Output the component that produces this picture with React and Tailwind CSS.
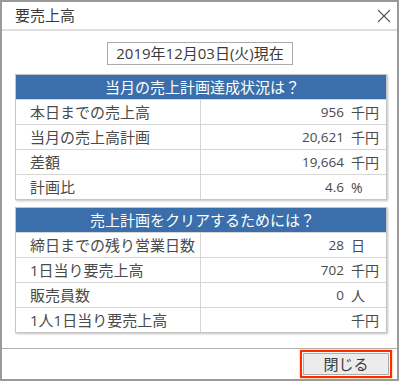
import React from 'react';

const jp = { fontFamily: '"Open Sans", "Noto Sans CJK JP", sans-serif' };

const planRows = [
  { label: '本日までの売上高', value: '956', unit: '千円' },
  { label: '当月の売上高計画', value: '20,621', unit: '千円' },
  { label: '差額', value: '19,664', unit: '千円' },
  { label: '計画比', value: '4.6', unit: '%' },
];

const clearRows = [
  { label: '締日までの残り営業日数', value: '28', unit: '日' },
  { label: '1日当り要売上高', value: '702', unit: '千円' },
  { label: '販売員数', value: '0', unit: '人' },
  { label: '1人1日当り要売上高', value: '', unit: '千円' },
];

function Section({ title, rows }) {
  return (
    <div className="border border-[#c6c6c6] shadow-[1px_1px_2px_rgba(0,0,0,0.25)] bg-white">
      <div className="h-[24px] bg-[#3a6fab] text-white text-[15px] flex items-center justify-center pl-[3px]">
        {title}
      </div>
      {rows.map((r, i) => (
        <div key={i} className="grid grid-cols-[185px_1fr] h-[25px] border-t border-[#d6d6d6]">
          <div className="flex items-center pl-[14px] text-[15px] text-[#4a4a4a] border-r border-[#d6d6d6]">
            {r.label}
          </div>
          <div className="flex items-center justify-end text-[#4a4a4a]">
            <span className="text-[13.5px]">{r.value}</span>
            <span className="w-[28px] ml-[7px] mr-[7px] text-[14px] text-left">{r.unit}</span>
          </div>
        </div>
      ))}
    </div>
  );
}

export default function App() {
  return (
    <div style={jp} className="w-[399px] h-[382px] bg-white">
      <div className="w-[399px] h-[381px] border-2 border-[#9a9a9a] flex flex-col bg-white">
        {/* Title bar */}
        <div className="h-[29px] flex items-center justify-between pl-[13px] pr-[5px] border-b-2 border-[#dedede]">
          <span className="text-[15px] text-[#3a3a3a]">要売上高</span>
          <svg width="14" height="14" viewBox="0 0 14 14" className="mr-[1px]">
            <path d="M1 1 L13 13 M13 1 L1 13" stroke="#555" strokeWidth="1.1" fill="none" />
          </svg>
        </div>

        {/* Body */}
        <div className="flex-1 pl-[13px] pr-[10px] pt-[11px]">
          <div className="flex justify-center">
            <div className="h-[23px] px-[8px] border border-[#aaaaaa] flex items-center text-[15px] text-[#3a3a3a] ml-[-2px]">
              2019年12月03日(火)現在
            </div>
          </div>
          <div className="mt-[9px]">
            <Section title="当月の売上計画達成状況は？" rows={planRows} />
          </div>
          <div className="mt-[7px]">
            <Section title="売上計画をクリアするためには？" rows={clearRows} />
          </div>
        </div>

        {/* Footer */}
        <div className="h-[31px] border-t border-[#b0b0b0] flex items-center justify-end pr-[5px]">
          <div className="border-2 border-[#ff2a00] shadow-[0_0_2px_#ffa040] p-[1px]">
            <button className="w-[86px] h-[22px] border border-[#adadad] bg-[#ececec] text-[15px] text-[#3a3a3a] flex items-center justify-center">
              閉じる
            </button>
          </div>
        </div>
      </div>
    </div>
  );
}
